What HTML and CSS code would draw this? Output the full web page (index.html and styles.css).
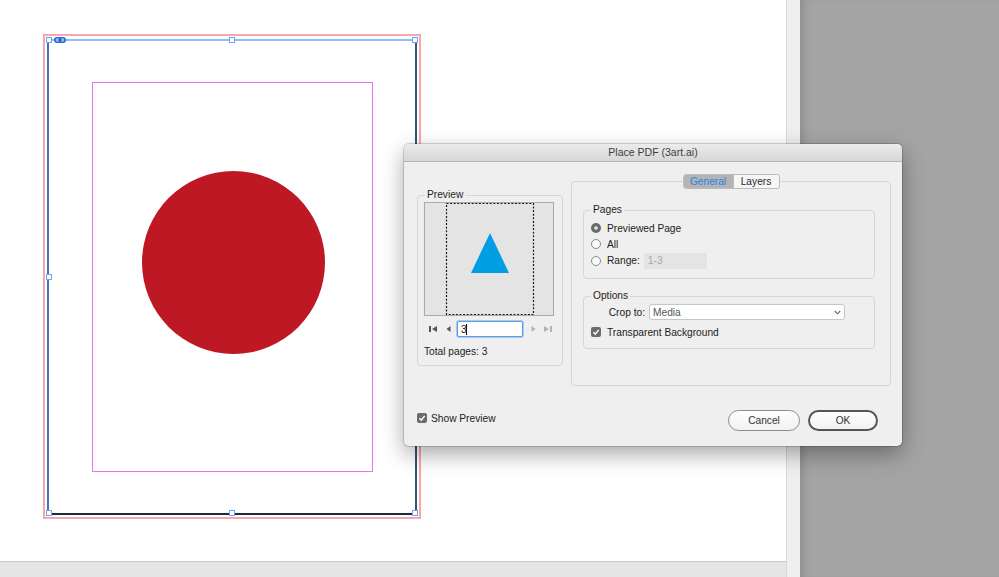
FILE: index.html
```html
<!DOCTYPE html>
<html lang="en">
<head>
<meta charset="utf-8">
<title>Place PDF</title>
<link rel="stylesheet" href="styles.css">
</head>
<body>
<div class="app">
  <div class="workspace">
    <div class="canvas">
      <div class="bleed">
        <div class="frame">
          <div class="margins"><div class="circle"></div></div>
          <span class="handle h-tl"></span>
          <span class="handle h-tc"></span>
          <span class="handle h-tr"></span>
          <span class="handle h-ml"></span>
          <span class="handle h-mr"></span>
          <span class="handle h-bl"></span>
          <span class="handle h-bc"></span>
          <span class="handle h-br"></span>
          <svg class="link-icon" width="12" height="6" viewBox="0 0 12 6">
            <rect x="0.8" y="0.8" width="6" height="4.4" rx="2.2" fill="none" stroke="#1f64d0" stroke-width="1.5"/>
            <rect x="5.2" y="0.8" width="6" height="4.4" rx="2.2" fill="none" stroke="#1f64d0" stroke-width="1.5"/>
          </svg>
        </div>
      </div>
    </div>
    <div class="hbar"></div>
  </div>
  <div class="vbar"></div>
  <div class="pasteboard"></div>

  <div class="dialog">
    <div class="titlebar">Place PDF (3art.ai)</div>
    <div class="dialog-main">
      <div class="group preview-group">
        <div class="group-title">Preview</div>
        <div class="preview-img">
          <svg width="128" height="112" viewBox="0 0 128 112">
            <rect x="21.5" y="0.5" width="87" height="111" fill="none" stroke="#1a1a1a" stroke-width="1.2" stroke-dasharray="2 1.6"/>
            <polygon points="65,30 84,70 46,70" fill="#009fe3"/>
          </svg>
        </div>
        <div class="nav-row">
          <svg class="nav-first" width="9" height="8" viewBox="0 0 9 8"><rect x="0" y="1" width="2" height="6" fill="#555"/><polygon points="8,1 3,4 8,7" fill="#555"/></svg>
          <svg class="nav-prev" width="5" height="8" viewBox="0 0 5 8"><polygon points="4.5,1 0.5,4 4.5,7" fill="#555"/></svg>
          <div class="page-input"><span>3</span><span class="caret"></span></div>
          <svg class="nav-next" width="5" height="8" viewBox="0 0 5 8"><polygon points="0.5,1 4.5,4 0.5,7" fill="#b4b4b4"/></svg>
          <svg class="nav-last" width="9" height="8" viewBox="0 0 9 8"><polygon points="0,1 5,4 0,7" fill="#b4b4b4"/><rect x="6" y="1" width="2" height="6" fill="#b4b4b4"/></svg>
        </div>
        <div class="total-pages">Total pages: 3</div>
      </div>

      <div class="tabpanel">
        <div class="tabs">
          <span class="tab tab-active">General</span>
          <span class="tab">Layers</span>
        </div>
        <div class="group pages-group">
          <div class="group-title">Pages</div>
          <div class="row row-first">
            <svg class="radio" width="10" height="10" viewBox="0 0 10 10"><circle cx="5" cy="5" r="5" fill="#6b6b6b"/><circle cx="5" cy="5" r="1.8" fill="#ececec"/></svg>
            <span>Previewed Page</span>
          </div>
          <div class="row">
            <svg class="radio" width="10" height="10" viewBox="0 0 10 10"><circle cx="5" cy="5" r="4.5" fill="#fafafa" stroke="#8a8a8a" stroke-width="1"/></svg>
            <span>All</span>
          </div>
          <div class="row row-tall">
            <svg class="radio" width="10" height="10" viewBox="0 0 10 10"><circle cx="5" cy="5" r="4.5" fill="#fafafa" stroke="#8a8a8a" stroke-width="1"/></svg>
            <span>Range:</span>
            <span class="range-input">1-3</span>
          </div>
        </div>
        <div class="group options-group">
          <div class="group-title">Options</div>
          <div class="row crop-row">
            <span class="crop-label">Crop to:</span>
            <div class="select">
              <span>Media</span>
              <svg width="7" height="5" viewBox="0 0 7 5"><polyline points="0.8,1 3.5,3.8 6.2,1" fill="none" stroke="#666" stroke-width="1.1"/></svg>
            </div>
          </div>
          <div class="row check-row">
            <svg class="checkbox" width="10" height="10" viewBox="0 0 10 10"><rect width="10" height="10" rx="2" fill="#6b6b6b"/><polyline points="2.4,5.2 4.3,7.1 7.7,2.9" fill="none" stroke="#fff" stroke-width="1.5"/></svg>
            <span>Transparent Background</span>
          </div>
        </div>
      </div>
    </div>
    <div class="footer">
      <label class="show-preview">
        <svg class="checkbox" width="10" height="10" viewBox="0 0 10 10"><rect width="10" height="10" rx="2" fill="#6b6b6b"/><polyline points="2.4,5.2 4.3,7.1 7.7,2.9" fill="none" stroke="#fff" stroke-width="1.5"/></svg>
        <span>Show Preview</span>
      </label>
      <div class="buttons">
        <button class="btn">Cancel</button>
        <button class="btn btn-default">OK</button>
      </div>
    </div>
  </div>
</div>
</body>
</html>
```

FILE: styles.css
```css
html, body {
  margin: 0;
  padding: 0;
}

body {
  width: 999px;
  height: 577px;
  overflow: hidden;
  font-family: "Liberation Sans", Arial, sans-serif;
}

.app {
  position: relative;
  display: flex;
  width: 999px;
  height: 577px;
  overflow: hidden;
}

.workspace {
  display: flex;
  flex-direction: column;
  width: 786px;
  border-right: 1px solid #d8d8d8;
}

.canvas {
  flex: 1;
  background: #ffffff;
  padding: 34px 0 0 43px;
}

.hbar {
  height: 15px;
  border-top: 1px solid #c8c8c8;
  background: #e5e5e5;
}

.vbar {
  width: 13px;
  background: #efefef;
}

.pasteboard {
  flex: 1;
  background: #a4a4a4;
  box-shadow: inset 8px 0 10px -6px rgba(0, 0, 0, 0.18);
}

/* document page */
.bleed {
  box-sizing: border-box;
  width: 378px;
  height: 485px;
  border: 2px solid #f9a6ad;
  padding: 3px 2px 2px 2px;
}

.frame {
  position: relative;
  box-sizing: border-box;
  width: 370px;
  height: 476px;
  border-style: solid;
  border-width: 2px;
  border-color: #8fc0f4 #37536f #1c2a3a #3f74b8;
  background: #ffffff;
}

.margins {
  box-sizing: border-box;
  width: 281px;
  height: 390px;
  margin: 41px 0 0 43px;
  border: 1px solid #e873f2;
  padding: 88px 0 0 49px;
}

.circle {
  width: 183px;
  height: 183px;
  border-radius: 50%;
  background: #bd1823;
}

.handle {
  position: absolute;
  box-sizing: border-box;
  width: 6px;
  height: 6px;
  border: 1px solid #6aa6f4;
  background: #ffffff;
}

.h-tl { left: -3px; top: -4px; }
.h-tc { left: 180px; top: -4px; }
.h-tr { left: 363px; top: -4px; }
.h-ml { left: -3px; top: 233px; }
.h-mr { left: 363px; top: 233px; }
.h-bl { left: -3px; top: 469px; }
.h-bc { left: 180px; top: 469px; }
.h-br { left: 363px; top: 469px; }

.link-icon {
  position: absolute;
  left: 5px;
  top: -4px;
}

/* dialog */
.dialog {
  position: absolute;
  left: 404px;
  top: 144px;
  width: 498px;
  height: 302px;
  background: #efefef;
  border-radius: 5px;
  box-shadow: 0 0 0 1px rgba(0, 0, 0, 0.16), 0 8px 22px rgba(0, 0, 0, 0.35);
  overflow: hidden;
  font-size: 10.2px;
  color: #222222;
}

.titlebar {
  height: 17px;
  line-height: 17px;
  text-align: center;
  font-size: 10.5px;
  color: #3d3d3d;
  background: linear-gradient(#ececec, #d6d6d6);
  border-bottom: 1px solid #b5b5b5;
}

.dialog-main {
  display: flex;
  align-items: flex-start;
  padding: 0 11px 0 13px;
}

.group {
  box-sizing: border-box;
  border: 1px solid #d6d6d6;
  border-radius: 4px;
}

.group-title {
  width: fit-content;
  height: 12px;
  line-height: 12px;
  margin: -7px 0 0 7px;
  padding: 0 2px;
  background: #efefef;
  color: #1e1e1e;
}

.preview-group {
  width: 146px;
  height: 171px;
  margin-top: 33px;
}

.preview-img {
  box-sizing: border-box;
  width: 130px;
  height: 114px;
  margin: 1px 0 0 6px;
  border: 1px solid #a9a9a9;
  background: #e4e4e4;
}

.preview-img svg {
  display: block;
}

.nav-row {
  display: flex;
  align-items: center;
  height: 16px;
  margin: 5px 0 0 11px;
}

.nav-row svg {
  display: block;
  flex: none;
}

.nav-prev { margin-left: 8px; }
.nav-next { margin-left: 8px; }
.nav-last { margin-left: 8px; }

.page-input {
  box-sizing: border-box;
  display: flex;
  align-items: center;
  width: 66px;
  height: 16px;
  margin-left: 6px;
  padding-left: 3px;
  border: 1px solid #5b9be8;
  border-radius: 2px;
  box-shadow: 0 0 0 1px #a9cbf3;
  background: #ffffff;
  color: #222222;
}

.caret {
  width: 1px;
  height: 11px;
  background: #111111;
  margin-left: -1px;
}

.total-pages {
  margin: 8px 0 0 6px;
  line-height: 14px;
}

.tabpanel {
  box-sizing: border-box;
  width: 320px;
  height: 205px;
  margin: 19px 0 0 8px;
  border: 1px solid #d6d6d6;
  border-radius: 4px;
}

.tabs {
  display: flex;
  box-sizing: border-box;
  width: fit-content;
  height: 15px;
  margin: -8px auto 0;
  border: 1px solid #bcbcbc;
  border-radius: 3px;
  overflow: hidden;
  background: #f6f6f6;
}

.tab {
  width: 45px;
  line-height: 13px;
  text-align: center;
  color: #2a2a2a;
}

.tab + .tab {
  border-left: 1px solid #bcbcbc;
}

.tab-active {
  width: 49px;
  background: #b4b4b4;
  color: #2485e8;
}

.pages-group {
  width: 292px;
  height: 69px;
  margin: 21px 0 0 11px;
}

.options-group {
  width: 292px;
  height: 53px;
  margin: 17px 0 0 11px;
}

.row {
  display: flex;
  align-items: center;
  height: 16px;
  padding-left: 7px;
}

.row-first {
  margin-top: 4px;
}

.row-tall {
  height: 17px;
  align-items: flex-end;
}

.row-tall svg {
  margin-bottom: 3px;
}

.row-tall span {
  line-height: 16px;
}

.row svg {
  display: block;
  flex: none;
  margin-right: 6px;
}

.range-input {
  box-sizing: border-box;
  width: 63px;
  height: 16px;
  line-height: 16px;
  margin-left: 4px;
  padding-left: 4px;
  background: #e4e4e4;
  color: #a8a8a8;
}

.crop-row {
  margin-top: 2px;
  padding-left: 20px;
}

.crop-label {
  width: 41px;
  text-align: right;
  margin-right: 4px;
}

.select {
  box-sizing: border-box;
  display: flex;
  align-items: center;
  justify-content: space-between;
  width: 196px;
  height: 16px;
  padding: 0 0 0 3px;
  border: 1px solid #c6c6c6;
  border-radius: 3px;
  background: #ffffff;
  color: #555555;
}

.select svg {
  margin-right: 3px;
}

.check-row {
  margin-top: 4px;
}

.footer {
  display: flex;
  align-items: flex-start;
  margin-top: 24px;
  padding: 0 24px 0 13px;
}

.show-preview {
  display: flex;
  align-items: center;
  margin-top: 2px;
  height: 12px;
}

.show-preview svg {
  display: block;
  margin-right: 4px;
}

.buttons {
  display: flex;
  gap: 8px;
  margin-left: auto;
}

.btn {
  box-sizing: border-box;
  width: 72px;
  height: 21px;
  padding: 0;
  border: 1px solid #8c8c8c;
  border-radius: 11px;
  background: linear-gradient(#fdfdfd, #f2f2f2);
  font-family: "Liberation Sans", Arial, sans-serif;
  font-size: 10.2px;
  color: #333333;
}

.btn-default {
  width: 70px;
  border: 2px solid #555555;
}
```
